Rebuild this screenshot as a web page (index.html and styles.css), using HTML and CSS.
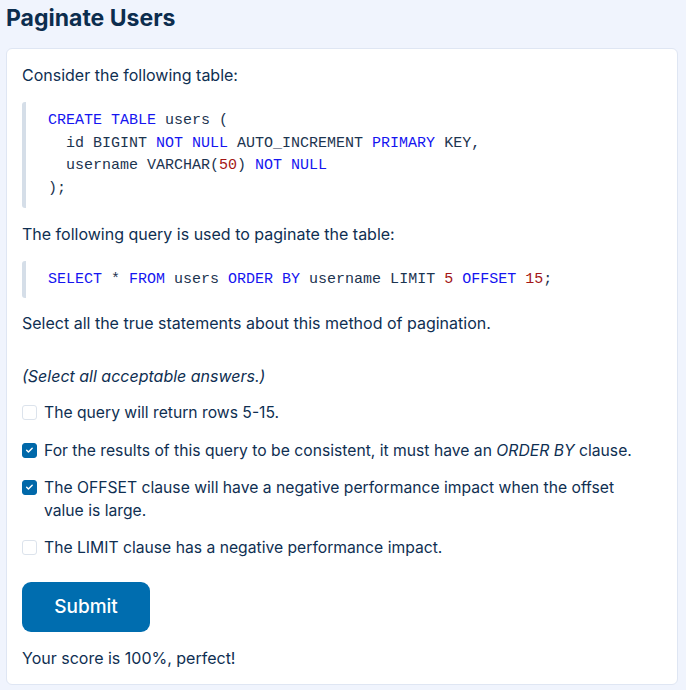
FILE: index.html
```html
<!DOCTYPE html>
<html>
<head>
<meta charset="utf-8">
<link rel="stylesheet" href="styles.css">
</head>
<body>
<h1 class="title">Paginate Users</h1>
<div class="card">
  <p class="para">Consider the following table:</p>
  <pre class="code"><span class="kw">CREATE</span> <span class="kw">TABLE</span> users (
  id BIGINT <span class="kw">NOT</span> <span class="kw">NULL</span> AUTO_INCREMENT <span class="kw">PRIMARY</span> KEY,
  username VARCHAR(<span class="num">50</span>) <span class="kw">NOT</span> <span class="kw">NULL</span>
);</pre>
  <p class="para">The following query is used to paginate the table:</p>
  <pre class="code code-short"><span class="kw">SELECT</span> * <span class="kw">FROM</span> users <span class="kw">ORDER</span> <span class="kw">BY</span> username LIMIT <span class="num">5</span> <span class="kw">OFFSET</span> <span class="num">15</span>;</pre>
  <p class="para">Select all the true statements about this method of pagination.</p>
  <p class="hint">(Select all acceptable answers.)</p>
  <ul class="options">
    <li class="option"><span class="box"></span><span class="label">The query will return rows 5-15.</span></li>
    <li class="option"><span class="box checked"><svg viewBox="0 0 16 16" width="16" height="16"><path d="M4.5 8.3l2.2 2.1 4.6-4.6" fill="none" stroke="#fff" stroke-width="1.8" stroke-linecap="round" stroke-linejoin="round"/></svg></span><span class="label">For the results of this query to be consistent, it must have an <em>ORDER BY</em> clause.</span></li>
    <li class="option"><span class="box checked"><svg viewBox="0 0 16 16" width="16" height="16"><path d="M4.5 8.3l2.2 2.1 4.6-4.6" fill="none" stroke="#fff" stroke-width="1.8" stroke-linecap="round" stroke-linejoin="round"/></svg></span><span class="label">The OFFSET clause will have a negative performance impact when the offset value is large.</span></li>
    <li class="option"><span class="box"></span><span class="label">The LIMIT clause has a negative performance impact.</span></li>
  </ul>
  <button class="submit">Submit</button>
  <p class="score">Your score is 100%, perfect!</p>
</div>
</body>
</html>
```
FILE: styles.css
```css
html, body {
  margin: 0;
  padding: 0;
  background: #f0f4fd;
}
body {
  padding: 0 8px 6px 6px;
  font-family: "Inter", "Open Sans", sans-serif;
  color: #0f2f52;
  font-size: 16px;
}
.title {
  margin: 0;
  padding: 5px 0 0 0;
  height: 48px;
  box-sizing: border-box;
  font-size: 23px;
  font-weight: 700;
  color: #0c2d4e;
  line-height: 27px;
}
.card {
  background: #fff;
  border: 1px solid #dfe6f3;
  border-radius: 6px;
  padding: 15px 15px 15px 15px;
}
.para {
  margin: 0;
  line-height: 22px;
}
.code {
  margin: 16px 0 15px 0;
  border-left: 4px solid #d5dee8;
  border-radius: 3px;
  padding: 8px 0 7px 22px;
  font-family: "Liberation Mono", monospace;
  font-size: 15px;
  line-height: 22.7px;
  color: #1c3450;
  white-space: pre;
}
.code-short {
  padding: 8px 0 6px 22px;
  margin-bottom: 14px;
}
.kw { color: #1515f0; }
.num { color: #a31515; }
.hint {
  margin: 31px 0 0 0;
  font-style: italic;
  line-height: 22px;
}
.options {
  list-style: none;
  margin: 14px 0 0 0;
  padding: 0;
}
.option {
  display: flex;
  align-items: flex-start;
  gap: 7px;
  margin-bottom: 14px;
  line-height: 23px;
  font-size: 15.7px;
}
.option:first-child {
  margin-bottom: 15px;
}
.label {
  max-width: 600px;
}
.box {
  flex: none;
  width: 15px;
  height: 15px;
  margin-top: 4px;
  box-sizing: border-box;
  border: 1px solid #dce3ec;
  border-radius: 3px;
  display: flex;
  align-items: center;
  justify-content: center;
}
.box.checked {
  background: #0068a9;
  border-color: #0068a9;
}
.box svg { width: 14px; height: 14px; }
.label em { font-style: italic; }
.submit {
  display: block;
  margin-top: 23px;
  width: 128px;
  height: 50px;
  border: none;
  border-radius: 9px;
  background: #006daf;
  color: #fff;
  font-family: "Inter", "Open Sans", sans-serif;
  font-size: 19px;
  font-weight: 500;
}
.score {
  margin: 15px 0 0 0;
  line-height: 22px;
}
```
